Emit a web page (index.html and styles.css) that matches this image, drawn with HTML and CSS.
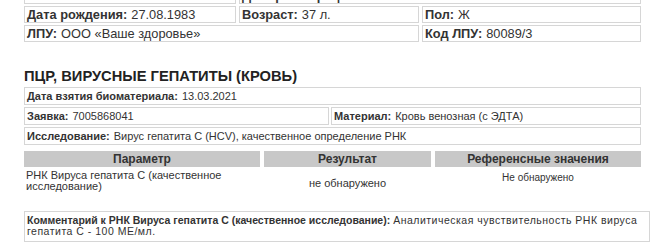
FILE: index.html
```html
<!DOCTYPE html>
<html lang="ru">
<head>
<meta charset="utf-8">
<link rel="stylesheet" href="styles.css">
</head>
<body>
<div class="page">
  <div class="patient">
    <div class="cell"><b>Заказ:</b> 7005868041</div>
    <div class="cell span2"><b>Дата регистрации:</b> 13.03.2021</div>
    <div class="cell"><b>Дата рождения:</b> 27.08.1983</div>
    <div class="cell"><b>Возраст:</b> 37 л.</div>
    <div class="cell"><b>Пол:</b> Ж</div>
    <div class="cell span2"><b>ЛПУ:</b> ООО «Ваше здоровье»</div>
    <div class="cell"><b>Код ЛПУ:</b> 80089/3</div>
  </div>

  <h2 class="title">ПЦР, ВИРУСНЫЕ ГЕПАТИТЫ (КРОВЬ)</h2>

  <div class="order">
    <div class="cell small span2"><b>Дата взятия биоматериала:</b> 13.03.2021</div>
    <div class="cell small"><b>Заявка:</b> 7005868041</div>
    <div class="cell small"><b>Материал:</b> Кровь венозная (с ЭДТА)</div>
    <div class="cell small span2"><b>Исследование:</b> Вирус гепатита С (HCV), качественное определение РНК</div>
  </div>

  <div class="results">
    <div class="head">Параметр</div>
    <div class="head">Результат</div>
    <div class="head">Референсные значения</div>
    <div class="param">РНК Вируса гепатита С (качественное исследование)</div>
    <div class="value">не обнаружено</div>
    <div class="ref">Не обнаружено</div>
  </div>

  <div class="comment"><b>Комментарий к РНК Вируса гепатита С (качественное исследование):</b> <span class="comment-text">Аналитическая чувствительность РНК вируса гепатита С - 100 МЕ/мл.</span></div>
</div>
</body>
</html>
```

FILE: styles.css
```css
html, body {
  margin: 0;
  padding: 0;
  background: #ffffff;
}

body {
  font-family: "Liberation Sans", Arial, sans-serif;
  color: #333333;
}

.page {
  width: 617px;
  margin: -13px 0 0 24px;
}

.cell {
  border: 1px solid #d6d6d6;
  box-sizing: border-box;
  padding: 0 2px;
  display: flex;
  align-items: center;
  white-space: nowrap;
  overflow: hidden;
}

.cell b {
  margin-right: 4px;
}

.span2 {
  grid-column: span 2;
}

.patient {
  display: grid;
  grid-template-columns: 212px 180px 1fr;
  grid-auto-rows: 17px;
  gap: 2px 3px;
  font-size: 12.8px;
}

.title {
  margin: 24px 0 0 0;
  font-size: 14.7px;
  line-height: 20px;
  font-weight: bold;
  color: #222222;
}

.order {
  display: grid;
  grid-template-columns: 305px 1fr;
  grid-auto-rows: 18px;
  gap: 2px;
  margin-top: 1px;
  font-size: 11px;
}

.results {
  display: grid;
  grid-template-columns: 236px 167px 1fr;
  column-gap: 4px;
  margin-top: 6px;
  font-size: 11px;
}

.head {
  background: #c8c8c8;
  font-weight: bold;
  text-align: center;
  height: 16px;
  line-height: 16px;
  font-size: 12px;
}

.param {
  padding: 3px 2px 0;
  line-height: 11px;
}

.value {
  text-align: center;
  padding-top: 10px;
  font-size: 11px;
}

.ref {
  text-align: center;
  padding-top: 5px;
  font-size: 10px;
}

.comment {
  width: 626px;
  box-sizing: border-box;
  margin-top: 19px;
  border: 1px solid #d6d6d6;
  padding: 3px 2px 4px;
  font-size: 10.5px;
  line-height: 11px;
}

.comment-text {
  letter-spacing: 0.5px;
}
```
